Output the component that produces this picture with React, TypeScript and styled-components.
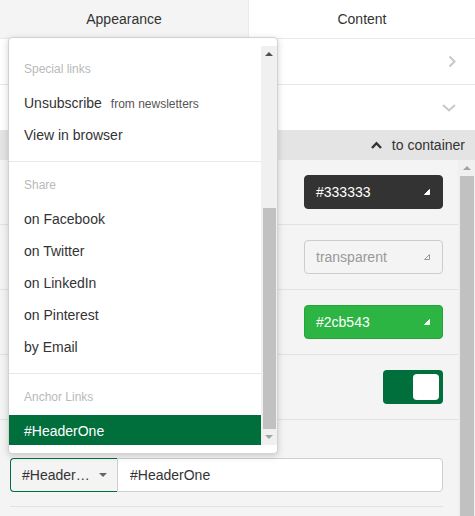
import React from "react";
import styled, { createGlobalStyle } from "styled-components";

const GlobalStyle = createGlobalStyle`
  body {
    margin: 0;
    font-family: "Liberation Sans", Arial, sans-serif;
    font-size: 14px;
    color: #333333;
  }
`;

const Panel = styled.div`
  position: relative;
  width: 475px;
  height: 516px;
  overflow: hidden;
  display: flex;
  flex-direction: column;
  background: #ffffff;
`;

const Tabs = styled.div`
  display: flex;
  height: 38px;
  flex-shrink: 0;
`;

const Tab = styled.div<{ muted?: boolean }>`
  display: flex;
  align-items: center;
  justify-content: center;
  width: ${({ muted }) => (muted ? "248px" : "auto")};
  flex: ${({ muted }) => (muted ? "none" : "1")};
  background: ${({ muted }) => (muted ? "#f4f4f4" : "#ffffff")};
  border-right: ${({ muted }) => (muted ? "1px solid #ebebeb" : "none")};
  color: #333333;
`;

const NavRow = styled.div`
  display: flex;
  align-items: center;
  justify-content: flex-end;
  height: 45px;
  padding: 0 19px 0 15px;
  flex-shrink: 0;
  border-top: 1px solid #e8e8e8;
  &:first-of-type {
    border-top: none;
  }
`;

const ParentBar = styled.div`
  display: flex;
  align-items: center;
  justify-content: flex-end;
  gap: 10px;
  height: 30px;
  padding: 0 10px;
  flex-shrink: 0;
  background: #e4e4e4;
  color: #333333;
`;

const ScrollArea = styled.div`
  flex: 1;
  display: flex;
  min-height: 0;
  background: #f4f4f4;
`;

const Content = styled.div`
  flex: 1;
  display: flex;
  flex-direction: column;
`;

const SettingRow = styled.div`
  display: flex;
  align-items: center;
  justify-content: flex-end;
  height: 64px;
  padding: 0 15px 0 10px;
  border-bottom: 1px solid #e2e2e2;
  flex-shrink: 0;
`;

const ColorField = styled.div<{ bg: string; fg: string; border: string }>`
  display: flex;
  align-items: center;
  justify-content: space-between;
  box-sizing: border-box;
  width: 139px;
  height: 34px;
  padding: 0 12px 0 11px;
  border-radius: 4px;
  background: ${({ bg }) => bg};
  color: ${({ fg }) => fg};
  border: 1px solid ${({ border }) => border};
`;

const Toggle = styled.div`
  display: flex;
  align-items: center;
  justify-content: flex-end;
  box-sizing: border-box;
  width: 60px;
  height: 34px;
  padding: 0 4px;
  border-radius: 4px;
  background: #006f3c;
`;

const Knob = styled.div`
  width: 26px;
  height: 26px;
  border-radius: 4px;
  background: #ffffff;
`;

const LinkRow = styled.div`
  display: flex;
  flex-direction: column;
  padding: 38px 15px 0 10px;
`;

const LinkControl = styled.div`
  display: flex;
  height: 34px;
`;

const AnchorSelect = styled.div`
  display: flex;
  align-items: center;
  justify-content: space-between;
  box-sizing: border-box;
  width: 107px;
  padding: 0 10px 0 11px;
  border: 1px solid #006f3c;
  border-right: none;
  border-radius: 4px 0 0 4px;
  background: #f4f4f4;
  color: #333333;
`;

const UrlInput = styled.div`
  flex: 1;
  display: flex;
  align-items: center;
  padding-left: 12px;
  border: 1px solid #cfcfcf;
  border-radius: 0 4px 4px 0;
  background: #ffffff;
`;

const Rule = styled.div`
  height: 1px;
  margin-top: 14px;
  background: #e2e2e2;
`;

const ScrollTrack = styled.div<{ width: number }>`
  display: flex;
  flex-direction: column;
  align-items: center;
  width: ${({ width }) => width}px;
  flex-shrink: 0;
  background: #f0f0f0;
`;

const ArrowCell = styled.div`
  display: flex;
  align-items: center;
  justify-content: center;
  height: 16px;
  width: 100%;
  flex-shrink: 0;
`;

const Arrow = styled.div<{ up?: boolean; color: string }>`
  width: 0;
  height: 0;
  border-left: 4px solid transparent;
  border-right: 4px solid transparent;
  ${({ up, color }) =>
    up ? `border-bottom: 4px solid ${color};` : `border-top: 4px solid ${color};`}
`;

const Thumb = styled.div<{ grow?: boolean }>`
  width: calc(100% - 3px);
  margin-left: 1px;
  background: #c1c1c1;
  flex: ${({ grow }) => (grow ? "1" : "none")};
`;

const Dropdown = styled.div`
  position: absolute;
  left: 8px;
  top: 37px;
  width: 270px;
  height: 417px;
  box-sizing: border-box;
  padding: 8px 0;
  display: flex;
  background: #ffffff;
  border: 1px solid #d2d2d2;
  border-radius: 4px;
  box-shadow: 0 2px 7px rgba(0, 0, 0, 0.18);
`;

const OptionList = styled.div`
  flex: 1;
  overflow: hidden;
  display: flex;
  flex-direction: column;
`;

const Group = styled.div`
  padding-bottom: 10px;
  border-bottom: 1px solid #e8e8e8;
  flex-shrink: 0;
  &:last-child {
    border-bottom: none;
  }
`;

const GroupTitle = styled.div`
  padding: 15px 15px 10px;
  line-height: 16px;
  font-size: 12px;
  color: #b9b9b9;
`;

const Option = styled.div<{ selected?: boolean }>`
  display: flex;
  align-items: baseline;
  gap: 9px;
  height: 32px;
  line-height: 32px;
  padding: 0 15px;
  background: ${({ selected }) => (selected ? "#006f3c" : "transparent")};
  color: ${({ selected }) => (selected ? "#ffffff" : "#333333")};
`;

const Hint = styled.span`
  font-size: 12px;
  color: #555555;
`;

const ChevronRight = () => (
  <svg width="8" height="13" viewBox="0 0 8 13">
    <path d="M1.5 1.5 L6.5 6.5 L1.5 11.5" fill="none" stroke="#c8c8c8" strokeWidth="2" />
  </svg>
);

const ChevronDown = () => (
  <svg width="14" height="8" viewBox="0 0 14 8">
    <path d="M1 1 L7 6.5 L13 1" fill="none" stroke="#c8c8c8" strokeWidth="2" />
  </svg>
);

const ChevronUp = () => (
  <svg width="11" height="8" viewBox="0 0 11 8">
    <path d="M1 7 L5.5 2.2 L10 7" fill="none" stroke="#333333" strokeWidth="2.4" />
  </svg>
);

const Corner = ({ outline }: { outline?: boolean }) => (
  <svg width="6" height="6" viewBox="0 0 6 6">
    <path
      d="M5.5 0.5 L5.5 5.5 L0.5 5.5 Z"
      fill={outline ? "none" : "#ffffff"}
      stroke={outline ? "#999999" : "#ffffff"}
      strokeWidth="1"
      strokeLinejoin="round"
    />
  </svg>
);

const Caret = () => (
  <svg width="8" height="4" viewBox="0 0 8 4">
    <path d="M0 0 L8 0 L4 4 Z" fill="#666666" />
  </svg>
);

const App = () => {
  return (
    <>
      <GlobalStyle />
      <Panel>
        <Tabs>
          <Tab muted>Appearance</Tab>
          <Tab>Content</Tab>
        </Tabs>
        <NavRow>
          <ChevronRight />
        </NavRow>
        <NavRow>
          <ChevronDown />
        </NavRow>
        <ParentBar>
          <ChevronUp />
          to container
        </ParentBar>
        <ScrollArea>
          <Content>
            <SettingRow>
              <ColorField bg="#333333" fg="#ffffff" border="#333333">
                #333333
                <Corner />
              </ColorField>
            </SettingRow>
            <SettingRow>
              <ColorField bg="#f4f4f4" fg="#999999" border="#cccccc">
                transparent
                <Corner outline />
              </ColorField>
            </SettingRow>
            <SettingRow>
              <ColorField bg="#2cb543" fg="#ffffff" border="#27a33c">
                #2cb543
                <Corner />
              </ColorField>
            </SettingRow>
            <SettingRow>
              <Toggle>
                <Knob />
              </Toggle>
            </SettingRow>
            <LinkRow>
              <LinkControl>
                <AnchorSelect>
                  #Header…
                  <Caret />
                </AnchorSelect>
                <UrlInput>#HeaderOne</UrlInput>
              </LinkControl>
              <Rule />
            </LinkRow>
          </Content>
          <ScrollTrack width={17}>
            <ArrowCell>
              <Arrow up color="#a3a3a3" />
            </ArrowCell>
            <Thumb grow />
          </ScrollTrack>
        </ScrollArea>

        <Dropdown>
          <OptionList>
            <Group>
              <GroupTitle>Special links</GroupTitle>
              <Option>
                Unsubscribe <Hint>from newsletters</Hint>
              </Option>
              <Option>View in browser</Option>
            </Group>
            <Group>
              <GroupTitle>Share</GroupTitle>
              <Option>on Facebook</Option>
              <Option>on Twitter</Option>
              <Option>on LinkedIn</Option>
              <Option>on Pinterest</Option>
              <Option>by Email</Option>
            </Group>
            <Group>
              <GroupTitle>Anchor Links</GroupTitle>
              <Option selected>#HeaderOne</Option>
            </Group>
          </OptionList>
          <ScrollTrack width={16}>
            <ArrowCell>
              <Arrow up color="#505050" />
            </ArrowCell>
            <Thumb style={{ marginTop: 146 }} grow />
            <ArrowCell>
              <Arrow color="#a3a3a3" />
            </ArrowCell>
          </ScrollTrack>
        </Dropdown>
      </Panel>
    </>
  );
};

export default App;
